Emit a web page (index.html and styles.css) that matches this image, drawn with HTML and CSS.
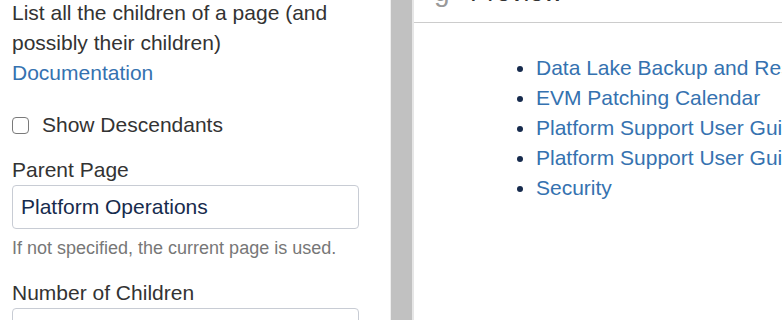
FILE: index.html
```html
<!doctype html>
<html lang="en">
  <head>
    <meta charset="UTF-8" />
    <meta name="viewport" content="width=device-width, initial-scale=1.0" />
    <title>Children Display</title>
    <link rel="stylesheet" href="styles.css">
  </head>
  <body>
    <div class="editor">
      <div class="options">
        <p class="desc">
          List all the children of a page (and possibly their children)<br />
          <a href="#">Documentation</a>
        </p>
        <label class="check-row">
          <span class="checkbox"></span>
          Show Descendants
        </label>
        <div class="field">
          <label for="parentPage">Parent Page</label>
          <input type="text" id="parentPage" value="Platform Operations" />
          <div class="help">If not specified, the current page is used.</div>
        </div>
        <div class="field">
          <label for="numChildren">Number of Children</label>
          <input type="text" id="numChildren" />
        </div>
      </div>
      <div class="scrollbar"></div>
      <div class="preview">
        <div class="preview-head">
          <span class="preview-icon">g</span>
          <span class="preview-title">Preview</span>
        </div>
        <div class="preview-body">
          <ul>
            <li><a href="#">Data Lake Backup and Restore</a></li>
            <li><a href="#">EVM Patching Calendar</a></li>
            <li><a href="#">Platform Support User Guide</a></li>
            <li><a href="#">Platform Support User Guide (Internal)</a></li>
            <li><a href="#">Security</a></li>
          </ul>
        </div>
      </div>
    </div>
  </body>
</html>
```

FILE: styles.css
```css
body {
  font-family: Arial, "Liberation Sans", sans-serif;
  margin: 0;
  background-color: white;
  color: #333;
  overflow: hidden;
}
a {
  color: #3572b0;
  text-decoration: none;
}
.editor {
  display: flex;
  height: 320px;
}
.options {
  width: 378px;
  padding-left: 12px;
  flex-shrink: 0;
  font-size: 21px;
  line-height: 30px;
}
.desc {
  margin: -2px 0 22px 0;
}
.check-row {
  display: flex;
  align-items: center;
  margin-bottom: 18px;
}
.checkbox {
  width: 15px;
  height: 15px;
  border: 1px solid #7a7a7a;
  border-radius: 4px;
  margin-right: 13px;
  background: white;
}
.field label {
  display: block;
  line-height: 24px;
  margin-bottom: 3px;
}
.field + .field {
  margin-top: 21px;
}
.field input {
  display: block;
  box-sizing: border-box;
  width: 347px;
  height: 44px;
  padding: 0 8px;
  border: 1px solid #c8ccd4;
  border-radius: 4px;
  font-family: inherit;
  font-size: 21px;
  color: #172b4d;
  outline: none;
}
.help {
  margin-top: 7px;
  font-size: 18px;
  line-height: 24px;
  color: #777;
}
.scrollbar {
  width: 21px;
  flex-shrink: 0;
  background-color: #c1c1c1;
  border-left: 1px solid #eeeeee;
  border-right: 2px solid #e6e6e6;
}
.preview {
  flex-grow: 1;
  min-width: 0;
  overflow: hidden;
}
.preview-head {
  height: 22px;
  border-bottom: 1px solid #cccccc;
  overflow: hidden;
  padding-left: 20px;
  white-space: nowrap;
}
.preview-icon {
  display: inline-block;
  margin-top: -22px;
  font-size: 28px;
  line-height: 28px;
  color: #999;
  vertical-align: top;
}
.preview-title {
  display: inline-block;
  margin-top: -20px;
  margin-left: 16px;
  font-size: 26px;
  line-height: 24px;
  color: #333;
  vertical-align: top;
}
.preview-body {
  padding: 30px 0 0 82px;
  font-size: 21px;
  line-height: 30px;
  color: #172b4d;
  white-space: nowrap;
}
.preview-body ul {
  margin: 0;
  padding-left: 40px;
}
```
